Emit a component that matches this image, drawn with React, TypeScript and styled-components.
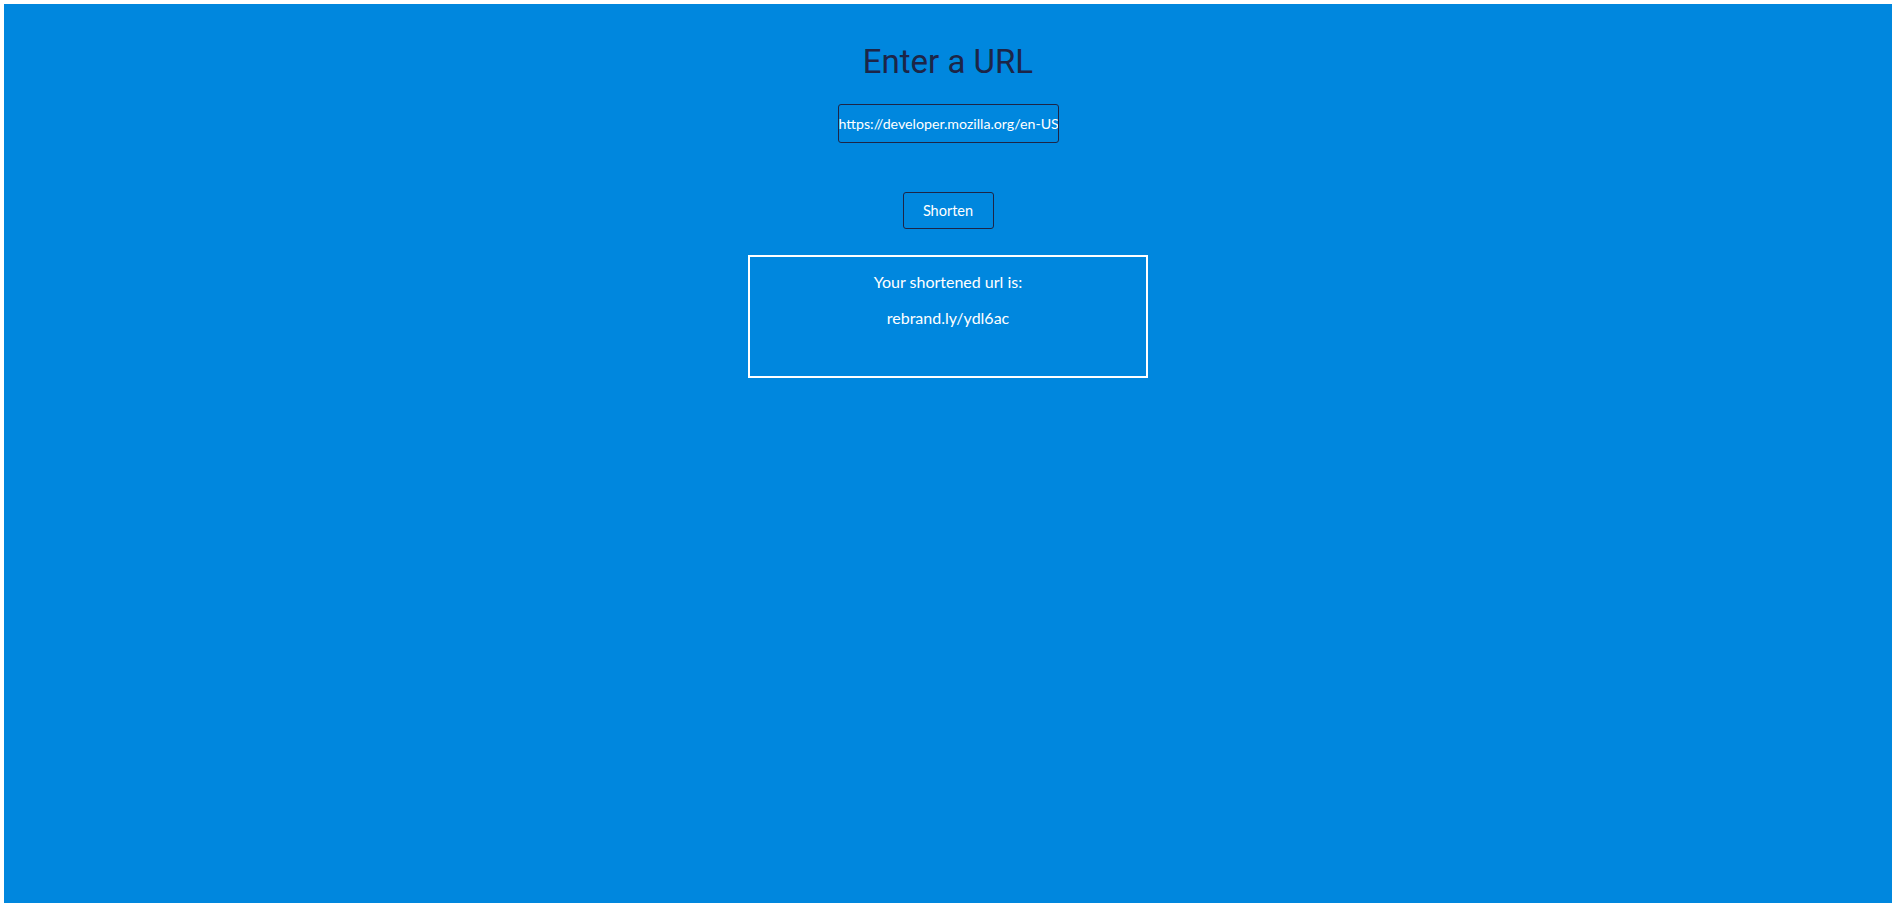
import React from "react";
import styled, { createGlobalStyle } from "styled-components";

const Global = createGlobalStyle`
  html, body { margin: 0; padding: 0; background: #ffffff; }
  body { padding: 4px; box-sizing: border-box; height: 100vh; }
  #root { height: 100%; }
`;

const Page = styled.main`
  box-sizing: border-box;
  height: 100%;
  width: 100%;
  background: #0087de;
  display: flex;
  flex-direction: column;
  align-items: center;
  padding-top: 40px;
`;

const Title = styled.h1`
  margin: 0;
  font-family: Roboto, "Liberation Sans", sans-serif;
  font-weight: 400;
  font-size: 33px;
  line-height: 36px;
  color: #1d2547;
`;

const UrlInput = styled.input`
  box-sizing: border-box;
  margin-top: 24px;
  width: 221px;
  height: 39px;
  padding: 0;
  border: 1px solid #1d2547;
  border-radius: 3px;
  background: transparent;
  color: #ffffff;
  font-family: Lato, "Noto Sans", sans-serif;
  font-size: 14.2px;
  outline: none;
`;

const Button = styled.button`
  box-sizing: border-box;
  margin-top: 49px;
  width: 91px;
  height: 37px;
  border: 1px solid #1d2547;
  border-radius: 3px;
  background: transparent;
  color: #ffffff;
  font-family: Lato, "Noto Sans", sans-serif;
  font-size: 14.5px;
  cursor: pointer;
`;

const ResultBox = styled.section`
  box-sizing: border-box;
  margin-top: 26px;
  width: 400px;
  height: 123px;
  border: 2px solid #ffffff;
  display: flex;
  flex-direction: column;
  align-items: center;
  gap: 16px;
  padding-top: 15px;
`;

const ResultLine = styled.p`
  margin: 0;
  font-family: Lato, "Noto Sans", sans-serif;
  font-size: 16px;
  line-height: 20px;
  color: #ffffff;
`;

export default function App() {
  return (
    <>
      <Global />
      <Page>
        <Title>Enter a URL</Title>
        <UrlInput
          type="text"
          defaultValue="https://developer.mozilla.org/en-US/docs/Web"
          aria-label="URL"
        />
        <Button type="button">Shorten</Button>
        <ResultBox>
          <ResultLine>Your shortened url is:</ResultLine>
          <ResultLine>rebrand.ly/ydl6ac</ResultLine>
        </ResultBox>
      </Page>
    </>
  );
}
